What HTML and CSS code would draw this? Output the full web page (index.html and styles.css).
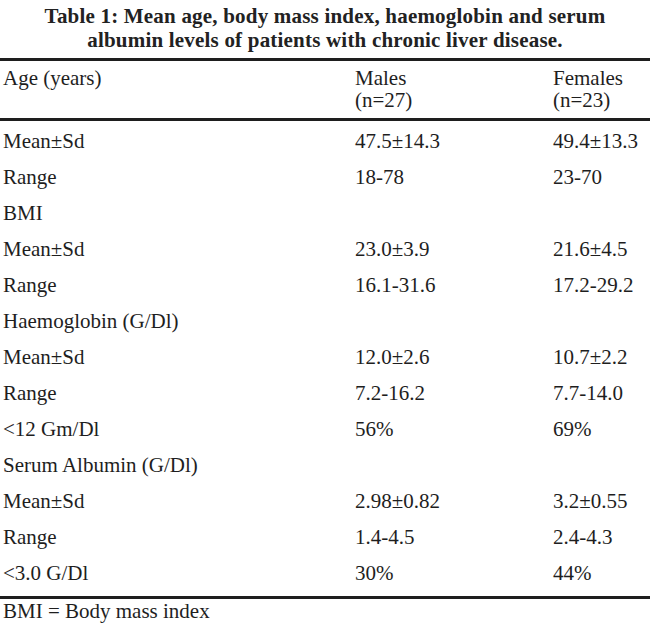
FILE: index.html
```html
<!DOCTYPE html>
<html>
<head>
<meta charset="utf-8">
<link rel="stylesheet" href="styles.css">
</head>
<body>
<div class="page">
  <h1 class="title">Table 1: Mean age, body mass index, haemoglobin and serum<br>albumin levels of patients with chronic liver disease.</h1>
  <div class="rule"></div>
  <div class="head">
    <div class="c1">Age (years)</div>
    <div class="c2">Males<br>(n=27)</div>
    <div class="c3">Females<br>(n=23)</div>
  </div>
  <div class="rule"></div>
  <div class="body">
    <div class="row"><div class="c1">Mean±Sd</div><div class="c2">47.5±14.3</div><div class="c3">49.4±13.3</div></div>
    <div class="row"><div class="c1">Range</div><div class="c2">18-78</div><div class="c3">23-70</div></div>
    <div class="row"><div class="c1">BMI</div><div class="c2"></div><div class="c3"></div></div>
    <div class="row"><div class="c1">Mean±Sd</div><div class="c2">23.0±3.9</div><div class="c3">21.6±4.5</div></div>
    <div class="row"><div class="c1">Range</div><div class="c2">16.1-31.6</div><div class="c3">17.2-29.2</div></div>
    <div class="row"><div class="c1">Haemoglobin (G/Dl)</div><div class="c2"></div><div class="c3"></div></div>
    <div class="row"><div class="c1">Mean±Sd</div><div class="c2">12.0±2.6</div><div class="c3">10.7±2.2</div></div>
    <div class="row"><div class="c1">Range</div><div class="c2">7.2-16.2</div><div class="c3">7.7-14.0</div></div>
    <div class="row"><div class="c1">&lt;12 Gm/Dl</div><div class="c2">56%</div><div class="c3">69%</div></div>
    <div class="row"><div class="c1">Serum Albumin (G/Dl)</div><div class="c2"></div><div class="c3"></div></div>
    <div class="row"><div class="c1">Mean±Sd</div><div class="c2">2.98±0.82</div><div class="c3">3.2±0.55</div></div>
    <div class="row"><div class="c1">Range</div><div class="c2">1.4-4.5</div><div class="c3">2.4-4.3</div></div>
    <div class="row"><div class="c1">&lt;3.0 G/Dl</div><div class="c2">30%</div><div class="c3">44%</div></div>
  </div>
  <div class="rule"></div>
  <div class="foot">BMI = Body mass index</div>
</div>
</body>
</html>
```
FILE: styles.css
```css
html, body {
  margin: 0;
  padding: 0;
  background: #ffffff;
}
.page {
  width: 650px;
  height: 625px;
  font-family: "Liberation Serif", "Times New Roman", serif;
  color: #1e1e1e;
  font-size: 21px;
  overflow: hidden;
}
.title {
  margin: 0;
  padding-top: 4px;
  height: 54px;
  font-size: 21px;
  font-weight: bold;
  letter-spacing: 0.2px;
  line-height: 24px;
  text-align: center;
  color: #222;
}
.rule {
  height: 3px;
  background: #1e1e1e;
}
.head, .row {
  display: grid;
  grid-template-columns: 352px 198px 1fr;
  padding-left: 3px;
}
.head {
  box-sizing: border-box;
  height: 57px;
  padding-top: 6px;
  line-height: 22px;
}
.body {
  box-sizing: border-box;
  height: 475px;
  padding-top: 2px;
}
.row {
  height: 36px;
  line-height: 36px;
}
.foot {
  padding-left: 3px;
  line-height: 24px;
}
```
